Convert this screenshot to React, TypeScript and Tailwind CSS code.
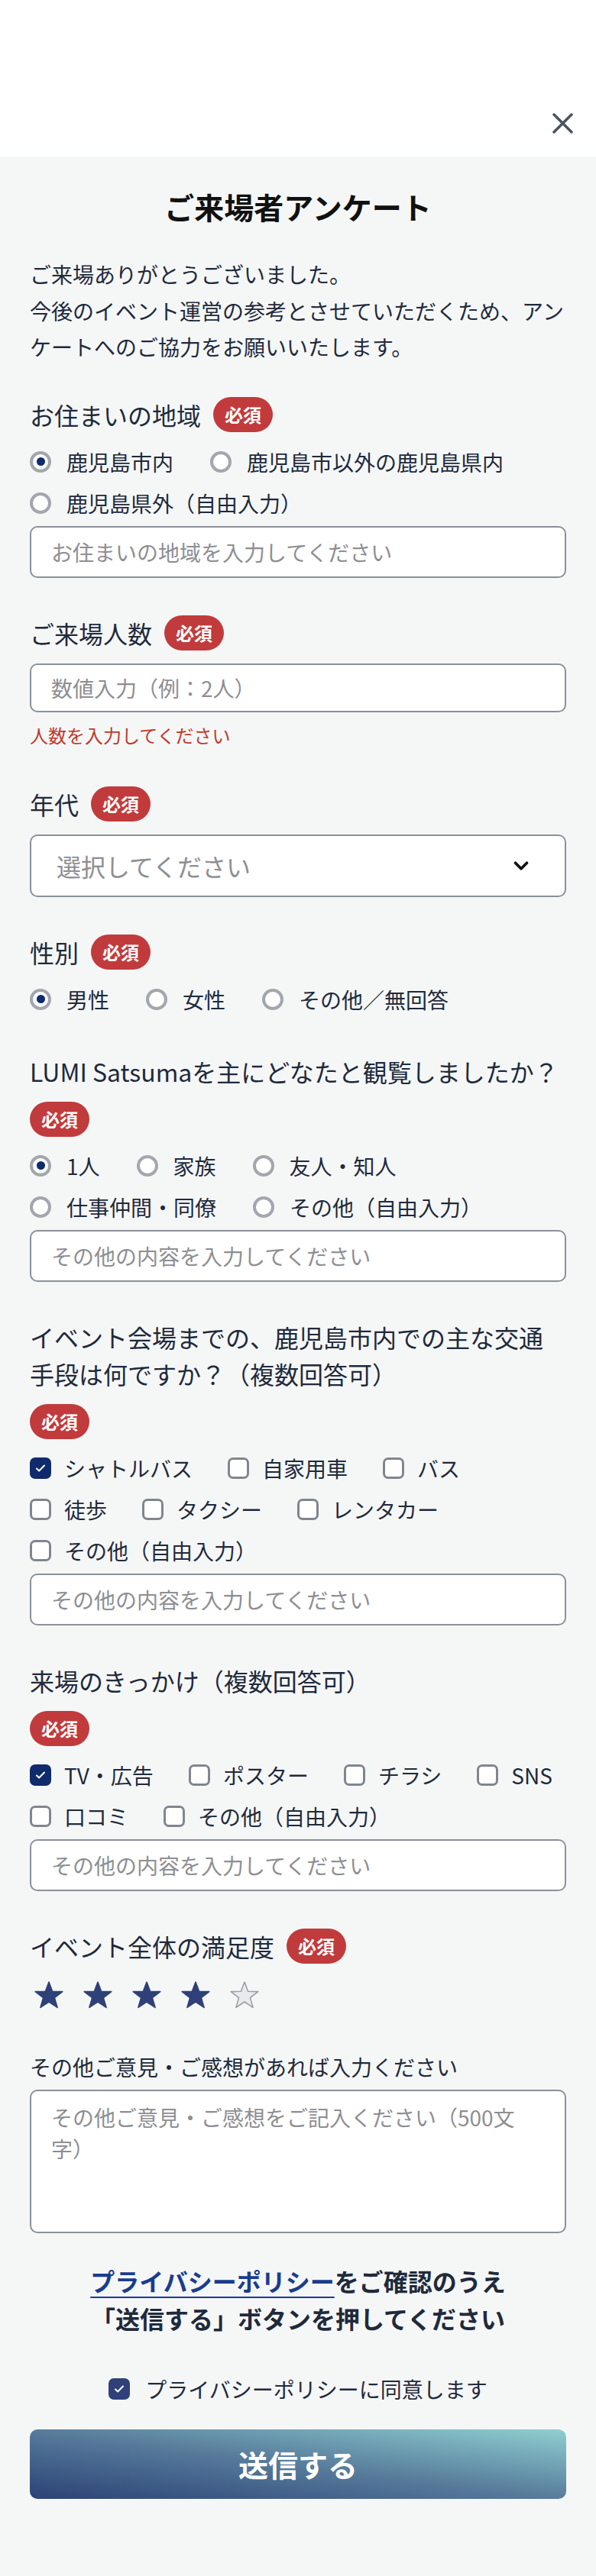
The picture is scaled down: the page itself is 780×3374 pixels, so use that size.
import { ChevronDown } from 'lucide-react';
import type { FC } from 'react';

const Badge: FC = () => (
  <span className="inline-flex h-[46px] shrink-0 items-center rounded-full bg-[#c13b3c] px-[15px] text-[24px] font-bold leading-none text-white">
    必須
  </span>
);

const QuestionLabel: FC<{ label: string; required?: boolean; badgeBelow?: boolean }> = ({
  label,
  required = true,
  badgeBelow = false,
}) => (
  <>
    <div className="flex flex-wrap items-center gap-x-[16px]">
      <span className="text-[32px] leading-[48px]">{label}</span>
      {required && !badgeBelow && <Badge />}
    </div>
    {required && badgeBelow && (
      <div className="mt-[16px] flex">
        <Badge />
      </div>
    )}
  </>
);

const Radio: FC<{ label: string; checked?: boolean }> = ({ label, checked }) => (
  <label className="flex h-[44px] items-center gap-[20px]">
    <span className="flex h-[28px] w-[28px] items-center justify-center rounded-full border-[4px] border-[#a3a7ad] bg-white">
      {checked && <span className="h-[11px] w-[11px] rounded-full bg-[#0d2b6e]" />}
    </span>
    <span className="text-[28px] leading-none">{label}</span>
  </label>
);

const Checkbox: FC<{ label: string; checked?: boolean }> = ({ label, checked }) => (
  <label className="flex h-[44px] items-center gap-[17px]">
    {checked ? (
      <span className="flex h-[28px] w-[28px] items-center justify-center rounded-[7px] bg-[#0f2b6b]">
        <svg width="16" height="16" viewBox="0 0 16 16" fill="none">
          <path d="M3 8.5l3.2 3L13 4.5" stroke="white" strokeWidth="2" strokeLinecap="round" strokeLinejoin="round" />
        </svg>
      </span>
    ) : (
      <span className="h-[28px] w-[28px] rounded-[7px] border-[3.5px] border-[#80868f] bg-white" />
    )}
    <span className="text-[28px] leading-none">{label}</span>
  </label>
);

const TextInput: FC<{ placeholder: string; tall?: boolean }> = ({ placeholder, tall = true }) => (
  <input
    type="text"
    placeholder={placeholder}
    className={
      tall
        ? 'mt-[8px] h-[68px] w-full rounded-[10px] border-2 border-[#8a919a] bg-white px-[26px] text-[28px] outline-none placeholder:text-[#8e8e93]'
        : 'h-[64px] w-full rounded-[10px] border-2 border-[#8a919a] bg-white px-[26px] text-[28px] outline-none placeholder:text-[#8e8e93]'
    }
  />
);

const Star: FC<{ filled?: boolean }> = ({ filled }) => (
  <svg width="40" height="38" viewBox="0 0 40 38">
    <polygon
      points="20,2 24.6,14.2 37.8,14.6 27.4,22.6 31.1,35.4 20,28 8.9,35.4 12.6,22.6 2.2,14.6 15.4,14.2"
      fill={filled ? '#2f4178' : '#e9eaec'}
      stroke={filled ? '#2f4178' : '#9a9ea5'}
      strokeWidth="1.6"
      strokeLinejoin="round"
    />
  </svg>
);

export default function App() {
  return (
    <div className="w-full font-['Noto_Sans_CJK_JP','Noto_Sans',sans-serif] text-[#1f2a3c]">
      <div className="flex h-[205px] items-start justify-end bg-white pr-[30px] pt-[148px]">
        <button type="button" aria-label="閉じる">
          <svg width="27" height="27" viewBox="0 0 27 27">
            <path d="M2 2L25 25M25 2L2 25" stroke="#4b5361" strokeWidth="3.5" strokeLinecap="round" />
          </svg>
        </button>
      </div>

      <div className="bg-[#f5f7f7] px-[39px] pb-[101px] pt-[37px]">
        <h1 className="text-center text-[39px] font-bold leading-[56px] text-[#111111]">ご来場者アンケート</h1>
        <p className="mt-[38px] text-[28px] leading-[47.5px]">
          ご来場ありがとうございました。
          <br />
          今後のイベント運営の参考とさせていただくため、アンケートへのご協力をお願いいたします。
        </p>

        {/* お住まいの地域 */}
        <section className="mt-[40px] flex flex-col">
          <QuestionLabel label="お住まいの地域" />
          <div className="mt-[16px] flex flex-wrap gap-x-[48px] gap-y-[10px]">
            <Radio label="鹿児島市内" checked />
            <Radio label="鹿児島市以外の鹿児島県内" />
            <Radio label="鹿児島県外（自由入力）" />
          </div>
          <TextInput placeholder="お住まいの地域を入力してください" />
        </section>

        {/* ご来場人数 */}
        <section className="mt-[48px] flex flex-col">
          <QuestionLabel label="ご来場人数" />
          <div className="mt-[16px]">
            <TextInput placeholder="数値入力（例：2人）" tall={false} />
          </div>
          <p className="mt-[12px] text-[24px] leading-[36px] text-[#c0392b]">人数を入力してください</p>
        </section>

        {/* 年代 */}
        <section className="mt-[48px] flex flex-col">
          <QuestionLabel label="年代" />
          <div className="mt-[16px] flex h-[82px] items-center justify-between rounded-[10px] border-2 border-[#8a919a] bg-white pl-[33px] pr-[42px]">
            <span className="text-[32px] text-[#8e8e93]">選択してください</span>
            <ChevronDown size={30} strokeWidth={3} color="#111111" />
          </div>
        </section>

        {/* 性別 */}
        <section className="mt-[48px] flex flex-col">
          <QuestionLabel label="性別" />
          <div className="mt-[16px] flex flex-wrap gap-x-[48px] gap-y-[10px]">
            <Radio label="男性" checked />
            <Radio label="女性" />
            <Radio label="その他／無回答" />
          </div>
        </section>

        {/* 観覧 */}
        <section className="mt-[48px] flex flex-col">
          <QuestionLabel label="LUMI Satsumaを主にどなたと観覧しましたか？" badgeBelow />
          <div className="mt-[16px] flex flex-wrap gap-x-[48px] gap-y-[10px]">
            <Radio label="1人" checked />
            <Radio label="家族" />
            <Radio label="友人・知人" />
            <Radio label="仕事仲間・同僚" />
            <Radio label="その他（自由入力）" />
          </div>
          <TextInput placeholder="その他の内容を入力してください" />
        </section>

        {/* 交通手段 */}
        <section className="mt-[48px] flex flex-col">
          <QuestionLabel label="イベント会場までの、鹿児島市内での主な交通手段は何ですか？（複数回答可）" badgeBelow />
          <div className="mt-[16px] flex flex-wrap gap-x-[46px] gap-y-[10px]">
            <Checkbox label="シャトルバス" checked />
            <Checkbox label="自家用車" />
            <Checkbox label="バス" />
            <Checkbox label="徒歩" />
            <Checkbox label="タクシー" />
            <Checkbox label="レンタカー" />
            <Checkbox label="その他（自由入力）" />
          </div>
          <TextInput placeholder="その他の内容を入力してください" />
        </section>

        {/* きっかけ */}
        <section className="mt-[48px] flex flex-col">
          <QuestionLabel label="来場のきっかけ（複数回答可）" badgeBelow />
          <div className="mt-[16px] flex flex-wrap gap-x-[46px] gap-y-[10px]">
            <Checkbox label="TV・広告" checked />
            <Checkbox label="ポスター" />
            <Checkbox label="チラシ" />
            <Checkbox label="SNS" />
            <Checkbox label="口コミ" />
            <Checkbox label="その他（自由入力）" />
          </div>
          <TextInput placeholder="その他の内容を入力してください" />
        </section>

        {/* 満足度 */}
        <section className="mt-[48px] flex flex-col">
          <QuestionLabel label="イベント全体の満足度" />
          <div className="mt-[16px] flex h-[48px] items-center gap-[24px] pl-[5px]">
            <Star filled />
            <Star filled />
            <Star filled />
            <Star filled />
            <Star />
          </div>
        </section>

        {/* ご意見 */}
        <section className="mt-[48px] flex flex-col">
          <span className="text-[28px] leading-[44px]">その他ご意見・ご感想があれば入力ください</span>
          <textarea
            placeholder="その他ご意見・ご感想をご記入ください（500文字）"
            className="mt-[8px] h-[188px] w-full resize-none rounded-[10px] border-2 border-[#8a919a] bg-white px-[26px] pt-[14px] text-[28px] leading-[41px] outline-none placeholder:text-[#8e8e93]"
          />
        </section>

        <p className="mt-[38px] text-center text-[32px] font-bold leading-[49px]">
          <a href="#" className="text-[#1a3c8f] underline decoration-2 underline-offset-[7px]">
            プライバシーポリシー
          </a>
          をご確認のうえ
          <br />
          「送信する」ボタンを押してください
        </p>

        <label className="mt-[46px] flex h-[44px] items-center justify-center gap-[20px]">
          <span className="flex h-[28px] w-[28px] items-center justify-center rounded-[7px] bg-[#2f4178]">
            <svg width="16" height="16" viewBox="0 0 16 16" fill="none">
              <path d="M3 8.5l3.2 3L13 4.5" stroke="white" strokeWidth="2" strokeLinecap="round" strokeLinejoin="round" />
            </svg>
          </span>
          <span className="text-[28px] leading-none">プライバシーポリシーに同意します</span>
        </label>

        <button
          type="button"
          className="mt-[31px] flex h-[91px] w-full items-center justify-center rounded-[10px] bg-linear-to-tr from-[#2c4275] via-[#587c9c] to-[#8fd0d0] text-[39px] font-bold text-white"
        >
          送信する
        </button>
      </div>
    </div>
  );
}
